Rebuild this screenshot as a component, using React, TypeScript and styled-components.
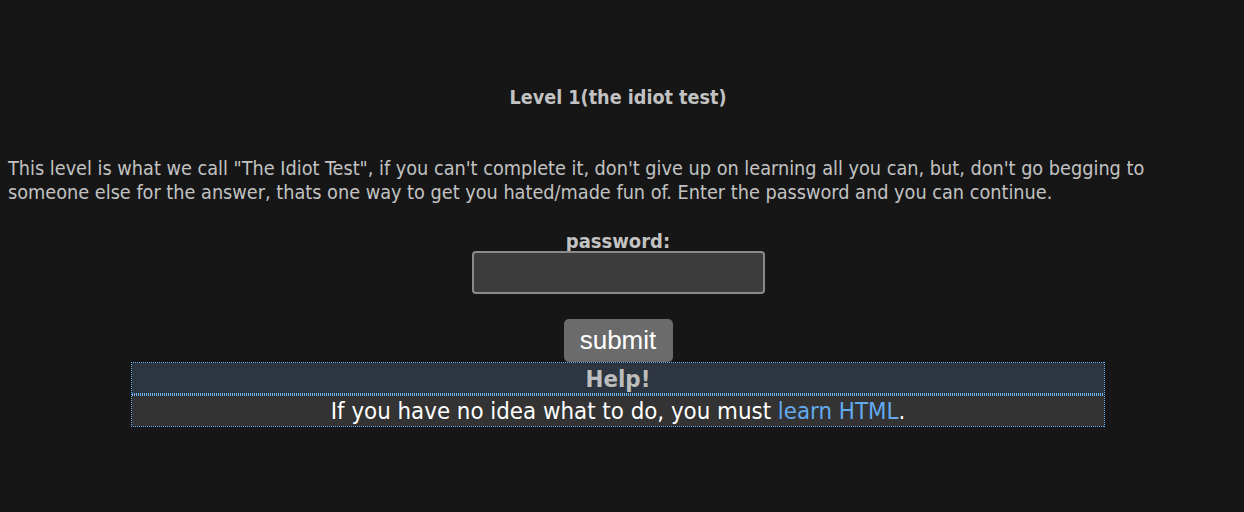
import styled, { createGlobalStyle, css } from "styled-components";

const GlobalStyle = createGlobalStyle`
  html, body {
    margin: 0;
    background: #161616;
  }
  body {
    padding: 8px;
    color: #c2c2c2;
    font-family: "DejaVu Sans Condensed", "DejaVu Sans", sans-serif;
  }
`;

const DOT = "#6ab6fa";

// 1px dotted edge drawn as a gradient so the dots stay crisp and bright
const edge = (side: "top" | "bottom" | "left" | "right", size = 1) => {
  const horizontal = side === "top" || side === "bottom";
  return `repeating-linear-gradient(${horizontal ? "90deg" : "180deg"}, ${DOT} 0 1px, transparent 1px 2px) ${side} / ${
    horizontal ? `100% ${size}px` : `${size}px 100%`
  } no-repeat`;
};

const Page = styled.div`
  width: 1220px;
  padding-top: 78px;
`;

const Title = styled.h3`
  margin: 0;
  text-align: center;
  font-size: 19.6px;
  font-weight: bold;
  line-height: 24px;
`;

const Intro = styled.p`
  max-width: 1180px;
  margin: 47px 0 0;
  font-size: 19.7px;
  line-height: 24px;
`;

const Form = styled.form`
  display: flex;
  flex-direction: column;
  align-items: center;
  margin-top: 26px;
`;

const Label = styled.label`
  font-size: 20px;
  font-weight: bold;
  line-height: 20px;
`;

const Field = styled.input`
  box-sizing: border-box;
  width: 293px;
  height: 43px;
  background: #3c3c3c;
  border: 2px solid #8a8a8a;
  border-radius: 4px;
  color: #fff;
  font-size: 18px;
  outline: none;
`;

const Submit = styled.button`
  box-sizing: border-box;
  width: 109px;
  height: 43px;
  margin-top: 25px;
  background: #6b6b6b;
  color: #fff;
  border: none;
  border-radius: 5px;
  font-family: "Liberation Sans", Arial, sans-serif;
  font-size: 26px;
  padding: 0;
`;

const HelpTable = styled.table`
  width: 974px;
  margin: 0 auto;
  padding: 1px;
  border-spacing: 0;
  text-align: center;
  background: ${edge("top")}, ${edge("bottom")}, ${edge("left")}, ${edge("right")};
`;

const Cell = styled.td<{ $head?: boolean }>`
  font-size: 23.8px;
  ${(p) =>
    p.$head
      ? css`
          padding: 3px 0 1px;
          line-height: 27px;
          background: ${edge("bottom")}, #2c3540;
          color: #bdbdbd;
          font-weight: bold;
        `
      : css`
          padding: 3px 0 0;
          line-height: 29px;
          background: ${edge("top", 2)}, #333333;
          color: #ffffff;
          font-weight: normal;
        `}
`;

const Link = styled.a`
  color: #62aaf0;
  text-decoration: none;
`;

export default function App() {
  return (
    <>
      <GlobalStyle />
      <Page>
        <Title>Level 1(the idiot test)</Title>
        <Intro>
          This level is what we call "The Idiot Test", if you can't complete it,
          don't give up on learning all you can, but, don't go begging to
          someone else for the answer, thats one way to get you hated/made fun
          of. Enter the password and you can continue.
        </Intro>
        <Form onSubmit={(e) => e.preventDefault()}>
          <Label htmlFor="pass">password:</Label>
          <Field id="pass" type="password" />
          <Submit type="submit">submit</Submit>
        </Form>
        <HelpTable>
          <tbody>
            <tr>
              <Cell $head>Help!</Cell>
            </tr>
            <tr>
              <Cell>
                If you have no idea what to do, you must{" "}
                <Link href="#">learn HTML</Link>.
              </Cell>
            </tr>
          </tbody>
        </HelpTable>
      </Page>
    </>
  );
}
